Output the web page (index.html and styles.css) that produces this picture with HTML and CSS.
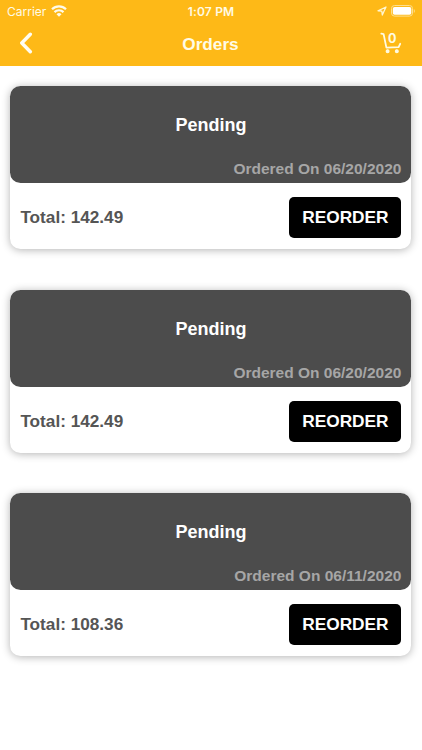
FILE: index.html
```
<!DOCTYPE html>
<html lang="en">
<head>
  <meta charset="UTF-8">
  <meta name="viewport" content="width=device-width, initial-scale=1.0">
  <title>Orders</title>
  <link rel="stylesheet" href="styles.css">
</head>
<body>
  <header class="header">
    <div class="statusBar">
      <div class="carrier">
        <span>Carrier</span>
        <svg class="wifi" width="16" height="12" viewBox="0 0 16 12" fill="none" stroke="#fffbe9" stroke-width="2.2">
          <path d="M1 4.3a10 10 0 0 1 14 0"/>
          <path d="M3.5 7.1a6.4 6.4 0 0 1 9 0"/>
          <path d="M8 11.7L5.5 9.2a3.5 3.5 0 0 1 5 0z" fill="#fffbe9" stroke="none"/>
        </svg>
      </div>
      <span class="time">1:07 PM</span>
      <div class="battery">
        <svg width="10" height="10" viewBox="0 0 10 10" fill="none" stroke="#fff6d2" stroke-width="1.3" stroke-linejoin="round">
          <path d="M9 1L1 4.8l3.8.4L5.3 9z"/>
        </svg>
        <svg width="25" height="12" viewBox="0 0 25 12">
          <rect x=".5" y=".5" width="21" height="10.6" rx="3" fill="none" stroke="#ffdf8e"/>
          <rect x="1.8" y="1.9" width="18.5" height="7.8" rx="1.8" fill="#fff"/>
          <path d="M22.8 4v4c1.4-.6 1.4-3.4 0-4z" fill="#ffdf8e"/>
        </svg>
      </div>
    </div>
    <div class="navBar">
      <button class="btn" aria-label="Back">
        <svg width="14" height="22" viewBox="0 0 14 22" fill="none" stroke="#fffdf2" stroke-width="3.5" stroke-linecap="round" stroke-linejoin="round">
          <path d="M11.3 2.3L2.8 11l8.5 8.7"/>
        </svg>
      </button>
      <h1>Orders</h1>
      <button class="btn cart" aria-label="Cart">
        <svg width="22" height="22" viewBox="0 0 22 22" fill="none" stroke="#fffbe3" stroke-width="1.8" stroke-linecap="round" stroke-linejoin="round">
          <path d="M1.3 1.6l2.3.5 2.8 13.5 12.2-.4 1.6-3.4"/>
          <circle cx="7.6" cy="19.2" r="1.4" fill="#fffbe3" stroke-width="1.2"/>
          <circle cx="16.8" cy="19.2" r="1.4" fill="#fffbe3" stroke-width="1.2"/>
        </svg>
        <span class="cartCount">0</span>
      </button>
    </div>
  </header>

  <main class="orders">
    <div class="card">
      <div class="cardTop">
        <h2>Pending</h2>
        <p class="date">Ordered On 06/20/2020</p>
      </div>
      <div class="cardBottom">
        <span class="total">Total: 142.49</span>
        <button class="reorder">REORDER</button>
      </div>
    </div>
    <div class="card">
      <div class="cardTop">
        <h2>Pending</h2>
        <p class="date">Ordered On 06/20/2020</p>
      </div>
      <div class="cardBottom">
        <span class="total">Total: 142.49</span>
        <button class="reorder">REORDER</button>
      </div>
    </div>
    <div class="card">
      <div class="cardTop">
        <h2>Pending</h2>
        <p class="date">Ordered On 06/11/2020</p>
      </div>
      <div class="cardBottom">
        <span class="total">Total: 108.36</span>
        <button class="reorder">REORDER</button>
      </div>
    </div>
  </main>
</body>
</html>
```
FILE: styles.css
```
* {
  box-sizing: border-box;
}
body {
  margin: 0;
  background-color: #fff;
  font-family: "Liberation Sans", Arial, sans-serif;
}
button {
  border: none;
  padding: 0;
  cursor: pointer;
  font-family: inherit;
}
svg {
  display: block;
}
.header {
  height: 66px;
  background-color: #feb917;
  color: #fffbe6;
}
.statusBar {
  display: grid;
  grid-template-columns: 1fr auto 1fr;
  align-items: center;
  height: 22px;
  padding: 0 6px 0 7px;
  font-family: Inter, sans-serif;
  font-size: 12px;
}
.carrier {
  display: flex;
  align-items: center;
  gap: 5px;
}
.time {
  font-weight: 600;
  letter-spacing: 0.2px;
  margin-right: 1px;
}
.battery {
  display: flex;
  align-items: center;
  justify-content: flex-end;
  gap: 4px;
}
.navBar {
  display: grid;
  grid-template-columns: 1fr auto 1fr;
  align-items: center;
  height: 42px;
  padding: 0 20px 0 19px;
}
.navBar h1 {
  margin: 0;
  padding-top: 1px;
  font-size: 17.2px;
  line-height: 20px;
}
.btn {
  background: none;
  justify-self: start;
}
.cart {
  position: relative;
  justify-self: end;
}
/* item count sits inside the cart basket */
.cartCount {
  position: absolute;
  top: 0;
  left: 8px;
  color: #fffbe3;
  font-family: Inter, sans-serif;
  font-size: 12.5px;
  font-weight: 700;
  line-height: 14px;
}
.orders {
  display: flex;
  flex-direction: column;
  gap: 40.7px;
  padding: 20px 10.6px 20px 10.4px;
}
.card {
  height: 163px;
  border-radius: 10.5px;
  background-color: #fff;
  box-shadow: 0 1px 8px rgba(0, 0, 0, 0.3);
}
.cardTop {
  height: 97px;
  padding: 28px 10px 0;
  border-radius: 10.5px;
  background-color: #4c4c4c;
}
.cardTop h2 {
  margin: 0;
  color: #fff;
  font-size: 18px;
  line-height: 22px;
  text-align: center;
}
.date {
  margin: 24px 0 0;
  color: #a6a6a6;
  font-size: 15.5px;
  font-weight: bold;
  line-height: 18px;
  text-align: right;
}
.cardBottom {
  display: flex;
  align-items: flex-start;
  justify-content: space-between;
  padding: 14px 10px 0;
}
.total {
  color: #555;
  font-size: 17.2px;
  font-weight: bold;
  line-height: 41px;
}
.reorder {
  width: 112px;
  height: 41px;
  border-radius: 5px;
  background-color: #000;
  color: #fff;
  font-size: 17.3px;
  font-weight: bold;
}
```
